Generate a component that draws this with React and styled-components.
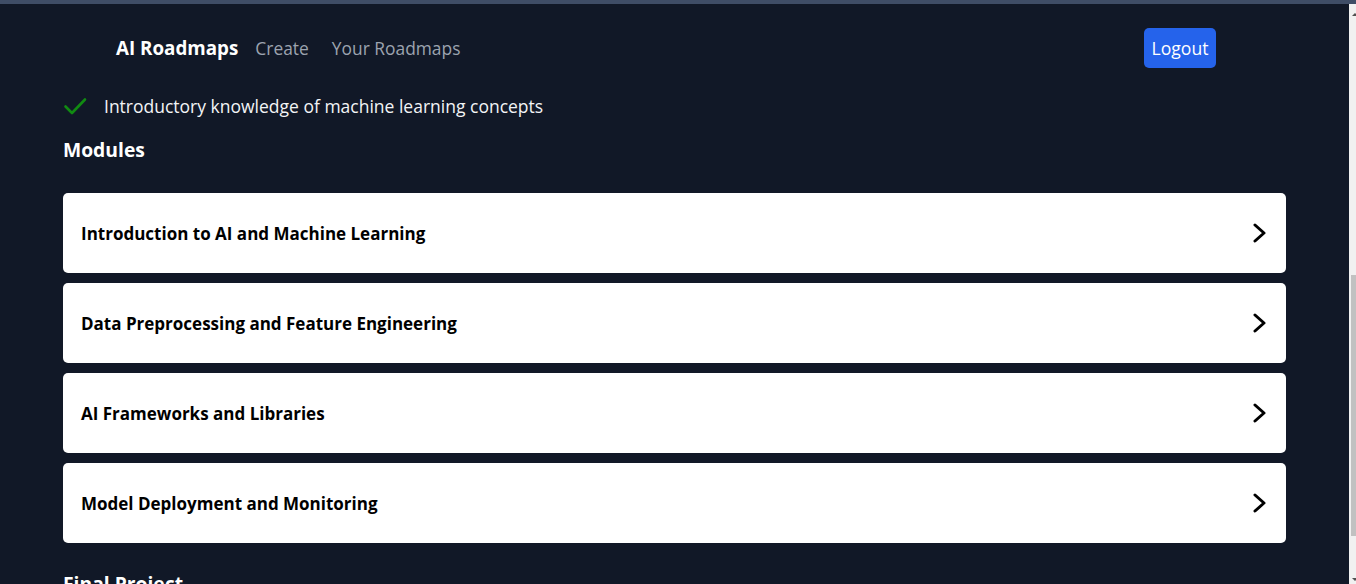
import React from "react";
import styled, { createGlobalStyle } from "styled-components";

const GlobalStyle = createGlobalStyle`
  html, body {
    margin: 0;
    padding: 0;
    height: 100%;
    overflow: hidden;
    background: #111827;
  }
  body {
    font-family: "Open Sans", "Noto Sans", sans-serif;
    color: #f3f4f6;
  }
  * {
    box-sizing: border-box;
  }
`;

const prerequisites = ["Introductory knowledge of machine learning concepts"];

const modules = [
  "Introduction to AI and Machine Learning",
  "Data Preprocessing and Feature Engineering",
  "AI Frameworks and Libraries",
  "Model Deployment and Monitoring",
];

const App = () => {
  return (
    <>
      <GlobalStyle />
      <Frame>
        <TopStrip />
        <Body>
          <Page>
            <Nav>
              <NavLeft>
                <Brand>AI Roadmaps</Brand>
                <NavLink>Create</NavLink>
                <NavLink>Your Roadmaps</NavLink>
              </NavLeft>
              <LogoutButton>Logout</LogoutButton>
            </Nav>

            <Main>
              <List>
                {prerequisites.map((item) => (
                  <ListItem key={item}>
                    <CheckIcon />
                    <span>{item}</span>
                  </ListItem>
                ))}
              </List>

              <SectionTitle $top={18} $bottom={29}>
                Modules
              </SectionTitle>
              <Modules>
                {modules.map((title) => (
                  <ModuleCard key={title}>
                    <ModuleTitle>{title}</ModuleTitle>
                    <Chevron />
                  </ModuleCard>
                ))}
              </Modules>

              <SectionTitle $top={27}>Final Project</SectionTitle>
            </Main>
          </Page>
          {/* browser scrollbar, page is scrolled down */}
          <ScrollTrack>
            <ScrollArrow $up />
            <ScrollThumb $top={271} $height={261} />
            <ScrollArrow />
          </ScrollTrack>
        </Body>
      </Frame>
    </>
  );
};

export default App;

const CheckIcon = () => (
  <CheckSvg viewBox="0 0 24 24">
    <polyline points="2.5,12.5 9,19 22,5.5" />
  </CheckSvg>
);

const Chevron = () => (
  <ChevronSvg viewBox="0 0 16 20">
    <polyline points="3,2 12,10 3,18" />
  </ChevronSvg>
);

const Frame = styled.div`
  display: flex;
  flex-direction: column;
  height: 100vh;
`;

const TopStrip = styled.div`
  height: 4px;
  flex-shrink: 0;
  background: #3f4d66;
`;

const Body = styled.div`
  flex: 1;
  min-height: 0;
  display: flex;
`;

const Page = styled.div`
  flex: 1;
  overflow: hidden;
`;

const ScrollTrack = styled.div`
  position: relative;
  width: 7px;
  flex-shrink: 0;
  display: flex;
  flex-direction: column;
  justify-content: space-between;
  background: #f1f1f1;
`;

const ScrollThumb = styled.div`
  position: absolute;
  left: 2px;
  right: 0;
  top: ${(p) => p.$top}px;
  height: ${(p) => p.$height}px;
  background: #c1c1c1;
`;

const ScrollArrow = styled.div`
  width: 0;
  height: 0;
  margin: ${(p) => (p.$up ? "9px 0 0 3px" : "0 0 3px 3px")};
  border-left: 3px solid transparent;
  border-right: 3px solid transparent;
  ${(p) => (p.$up ? "border-bottom: 3px solid #505050;" : "border-top: 3px solid #505050;")}
`;

const Nav = styled.nav`
  height: 88px;
  display: flex;
  align-items: center;
  justify-content: space-between;
  padding: 0 133px 0 116px;
  background: #111827;
`;

const NavLeft = styled.div`
  display: flex;
  align-items: center;
  gap: 17px;
  margin-top: -1px;
`;

const Brand = styled.span`
  font-size: 18.8px;
  font-weight: 700;
  color: #ffffff;
`;

const NavLink = styled.span`
  font-size: 17.4px;
  color: #9ca3af;
  margin-right: 6px;
`;

const LogoutButton = styled.button`
  width: 72px;
  height: 40px;
  padding: 0 0 1px;
  border: none;
  border-radius: 5px;
  background: #2563eb;
  color: #ffffff;
  font-family: inherit;
  font-size: 17.6px;
  cursor: pointer;
`;

const Main = styled.main`
  padding: 2px 63px 0;
`;

const SectionTitle = styled.h2`
  margin: ${(p) => p.$top || 0}px 0 ${(p) => (p.$bottom === undefined ? 16 : p.$bottom)}px;
  font-size: 19.3px;
  line-height: 28px;
  font-weight: 700;
  color: #ffffff;
`;

const List = styled.ul`
  list-style: none;
  margin: 0;
  padding: 0;
  display: flex;
  flex-direction: column;
  gap: 8px;
`;

const ListItem = styled.li`
  display: flex;
  align-items: center;
  gap: 17px;
  height: 24px;
  font-size: 17.5px;
  color: #f3f4f6;
`;

const CheckSvg = styled.svg`
  width: 24px;
  height: 24px;
  flex-shrink: 0;
  fill: none;
  stroke: #118a12;
  stroke-width: 2.6;
  stroke-linecap: round;
  stroke-linejoin: round;
`;

const Modules = styled.div`
  display: flex;
  flex-direction: column;
  gap: 10px;
`;

const ModuleCard = styled.div`
  height: 80px;
  display: flex;
  align-items: center;
  justify-content: space-between;
  padding: 0 18px;
  background: #ffffff;
  border-radius: 5px;
`;

const ModuleTitle = styled.span`
  font-size: 17px;
  font-weight: 700;
  color: #000000;
`;

const ChevronSvg = styled.svg`
  width: 16px;
  height: 20px;
  fill: none;
  stroke: #000000;
  stroke-width: 3;
  stroke-linecap: round;
  stroke-linejoin: round;
`;
